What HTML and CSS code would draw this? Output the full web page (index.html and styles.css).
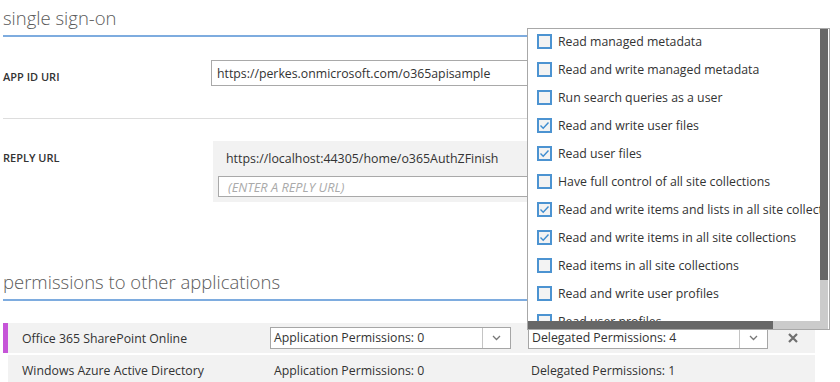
FILE: index.html
```html
<!DOCTYPE html>
<html lang="en">
<head>
  <meta charset="UTF-8" />
  <title>Application configuration</title>
  <link rel="stylesheet" href="styles.css">
</head>
<body>
<div class="page">
  <h2 class="section-title">single sign-on</h2>

  <div class="field-row app-id">
    <label class="field-label" for="app-id-uri">APP ID URI</label>
    <input id="app-id-uri" class="text-input" type="text" value="https://perkes.onmicrosoft.com/o365apisample">
  </div>

  <div class="field-row reply">
    <label class="field-label" for="reply-new">REPLY URL</label>
    <div class="reply-box">
      <div class="reply-item">https://localhost:44305/home/o365AuthZFinish</div>
      <input id="reply-new" class="text-input reply-input" type="text" placeholder="(ENTER A REPLY URL)">
    </div>
  </div>

  <h2 class="section-title perm-title">permissions to other applications</h2>

  <div class="app-list">
    <div class="app-row selected">
      <div class="app-name">Office 365 SharePoint Online</div>
      <div class="perm-select">
        <span class="perm-value">Application Permissions: 0</span>
        <span class="perm-arrow"><svg width="9" height="6" viewBox="0 0 9 6"><polyline points="1,1 4.5,4.5 8,1" fill="none" stroke="#777" stroke-width="1.3"/></svg></span>
      </div>
      <div class="perm-select deleg">
        <span class="perm-value">Delegated Permissions: 4</span>
        <span class="perm-arrow"><svg width="9" height="6" viewBox="0 0 9 6"><polyline points="1,1 4.5,4.5 8,1" fill="none" stroke="#777" stroke-width="1.3"/></svg></span>
      </div>
      <div class="app-remove"><svg width="10" height="10" viewBox="0 0 10 10"><path d="M1 1L9 9M9 1L1 9" stroke="#6f6f6f" stroke-width="2.2"/></svg></div>
    </div>
    <div class="app-row">
      <div class="app-name">Windows Azure Active Directory</div>
      <div class="perm-text">Application Permissions: 0</div>
      <div class="perm-text deleg">Delegated Permissions: 1</div>
      <div class="app-remove"></div>
    </div>
  </div>

  <div class="perm-popup">
    <ul class="perm-list" id="perm-list"></ul>
    <div class="vscroll"><div class="vthumb"></div></div>
    <div class="hscroll"><div class="hthumb"></div></div>
    <div class="scroll-corner"></div>
  </div>
</div>

<script>
const permissions = [
  ['Read managed metadata', false],
  ['Read and write managed metadata', false],
  ['Run search queries as a user', false],
  ['Read and write user files', true],
  ['Read user files', true],
  ['Have full control of all site collections', false],
  ['Read and write items and lists in all site collections', true],
  ['Read and write items in all site collections', true],
  ['Read items in all site collections', false],
  ['Read and write user profiles', false],
  ['Read user profiles', false],
];

const list = document.getElementById('perm-list');
permissions.forEach(([label, checked]) => {
  const li = document.createElement('li');
  li.className = 'perm-item';
  li.innerHTML = `
    <span class="check ${checked ? 'on' : ''}">${checked ? '<svg width="11" height="11" viewBox="0 0 11 11"><polyline points="1.5,5.5 4.2,8.2 9.5,2.5" fill="none" stroke="#3f8dd0" stroke-width="1.4"/></svg>' : ''}</span>
    <span class="perm-label">${label}</span>
  `;
  list.appendChild(li);
});
</script>
</body>
</html>
```

FILE: styles.css
```css
body {margin:0; background:#fff; color:#333; font-family:"Open Sans", "Liberation Sans", sans-serif;}
.page {position:relative; width:840px; height:382px; overflow:hidden; padding-left:3px; box-sizing:border-box;}

.section-title {margin:0; padding:5px 0 4px; font-size:18.5px; line-height:26px; font-weight:300; color:#5a5a5a; border-bottom:2px solid #7eacdf; width:812px;}
.perm-title {margin-top:62px;}

.field-row {display:grid; grid-template-columns:208px 1fr; align-items:start;}
.field-label {padding-top:10px; font-size:11px; line-height:14px; font-weight:600; color:#333;}
.text-input {font-family:inherit; font-size:12.3px; color:#333; border:1px solid #a9a9a9; background:#fff; padding:0 5px; margin:0; box-sizing:border-box; outline:none;}

.app-id {padding:23px 0 32px; border-bottom:1px solid #ddd; width:812px;}
.app-id .text-input {width:420px; height:26px;}

.reply {padding-top:22px;}
.reply-box {margin-left:2px; width:400px; background:#f2f2f2; padding:0 5px 5px;}
.reply-item {height:35px; line-height:35px; padding-left:8px; font-size:12.4px; color:#333;}
.reply-input {display:block; width:100%; height:21px; padding-left:9px; font-size:12.8px;}
.reply-input::placeholder {color:#aaa; font-style:italic;}

.app-list {margin-top:22px; display:flex; flex-direction:column; gap:2px; width:812px;}
.app-row {display:grid; grid-template-columns:262px 241px 257px 47px; align-items:center; height:30px; background:#f2f2f2; background-clip:padding-box; border-left:5px solid transparent; font-size:12.3px;}
.app-row.selected {border-left-color:#c655d8;}
.app-name {padding-left:14px; color:#333;}
.perm-select {display:flex; height:22px; border:1px solid #a6a6a6; background:#fff; box-sizing:border-box;}
.perm-select.deleg {margin-left:17px;}
.perm-value {flex:1; padding-left:3px; line-height:20px; color:#333;}
.perm-arrow {width:27px; border-left:1px solid #c4c4c4; display:flex; align-items:center; justify-content:center;}
.perm-text {padding-left:4px; color:#333;}
.perm-text.deleg {padding-left:20px;}
.app-remove {display:flex; justify-content:center; padding-left:3px;}

.perm-popup {position:absolute; left:527px; top:28px; width:303px; height:302px; box-sizing:border-box; border:1px solid #a8a8a8; background:#fff; display:grid; grid-template-columns:292px 8px; grid-template-rows:292px 8px;}
.perm-list {list-style:none; margin:0; padding:0; overflow:hidden;}
.perm-item {display:flex; align-items:center; height:28px; padding-left:9px; white-space:nowrap; font-size:12.3px; color:#333;}
.perm-item:first-child {margin-top:-2px;}
.check {width:15px; height:15px; box-sizing:border-box; border:2px solid #4c93d1; background:#f3f3f3; margin-right:6px; flex:none; display:flex; align-items:center; justify-content:center;}
.vscroll, .hscroll, .scroll-corner {background:#cbcbcb;}
.vthumb {height:251px; background:#676767;}
.hthumb {width:245px; height:100%; background:#676767;}
```
